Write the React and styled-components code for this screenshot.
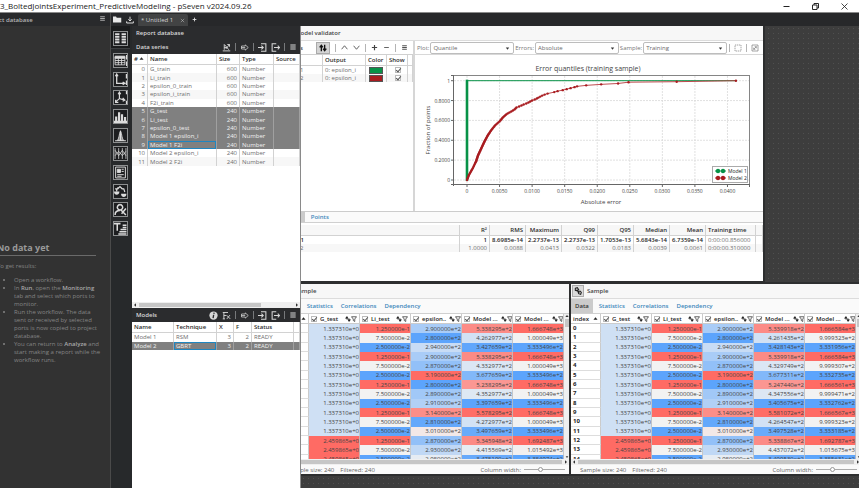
import React from "react";
import styled, { createGlobalStyle, css } from "styled-components";

const GlobalStyle = createGlobalStyle`
  * {
    box-sizing: border-box;
  }
  body {
    margin: 0;
    background: #3d3d3d;
  }
  body, button, select, input, table {
    font-family: "Open Sans", "Noto Sans", sans-serif;
    font-size: 6px;
    line-height: 8px;
  }
  button {
    border: 0;
    padding: 0;
    background: none;
    color: inherit;
  }
  a {
    text-decoration: none;
  }
`;

/* ---------- shell ---------- */

const Shell = styled.div`
  display: flex;
  flex-direction: column;
  height: 100vh;
  overflow: hidden;
`;

const TitleBar = styled.header`
  display: flex;
  justify-content: space-between;
  align-items: center;
  flex: none;
  height: 13px;
  padding-right: 10px;
  background: #fff;
  border-bottom: 1px solid #8a8a8a;
  color: #222;
  h1 {
    margin: 0;
    font-size: 8px;
    font-weight: 400;
    line-height: 12px;
    white-space: nowrap;
  }
`;

const WindowButtons = styled.div`
  display: flex;
  gap: 20px;
  button {
    display: flex;
  }
`;

const Body = styled.div`
  display: flex;
  flex: 1;
  min-height: 0;
`;

/* ---------- project database ---------- */

const ProjectPanel = styled.aside`
  display: flex;
  flex-direction: column;
  flex: none;
  width: 141px;
  margin-left: -30px;
  background: #323232;
  border-right: 1px solid #4a4a4a;
  color: #858585;
`;

const ProjectHeader = styled.div`
  display: flex;
  justify-content: space-between;
  align-items: center;
  height: 13px;
  padding: 0 4px 0 14px;
  background: #292a2c;
  color: #b5b5b5;
  font-weight: 600;
`;

const EmptyNote = styled.div`
  margin: 216px 14px 0 27px;
  white-space: nowrap;
  h2 {
    margin: 0 0 6px;
    padding-bottom: 1px;
    border-bottom: 1px solid #6a6a6a;
    font-size: 9px;
    line-height: 12px;
    color: #9a9a9a;
  }
  p {
    margin: 0 0 6px;
  }
  ul {
    margin: 0;
    padding: 0 0 0 17px;
  }
  b {
    color: #a8a8a8;
    font-weight: 600;
  }
`;

/* ---------- workspace ---------- */

const Workspace = styled.main`
  display: flex;
  flex-direction: column;
  flex: 1;
  min-width: 0;
`;

const TabBar = styled.nav`
  display: flex;
  align-items: center;
  flex: none;
  height: 13px;
  padding-left: 2px;
  gap: 4px;
  background: #27282a;
  color: #e8e8e8;
  button {
    display: flex;
  }
`;

const ReportTab = styled.div`
  display: flex;
  align-items: center;
  justify-content: space-between;
  align-self: flex-end;
  width: 50px;
  height: 12px;
  padding: 0 3px;
  border-radius: 2px 2px 0 0;
  background: #424344;
  color: #d5d5d5;
`;

const WorkArea = styled.div`
  display: flex;
  flex: 1;
  min-height: 0;
`;

const ToolStrip = styled.div`
  display: flex;
  flex-direction: column;
  align-items: center;
  flex: none;
  width: 21px;
  padding-right: 2px;
  background: #27292b;
`;

const ToolCurrent = styled.div`
  display: flex;
  justify-content: center;
  align-items: flex-end;
  width: 100%;
  height: 23px;
  padding-bottom: 2px;
  margin-bottom: 4px;
  background: #1b1c1d;
  border-bottom: 1px solid #3d3f41;
`;

const ToolList = styled.div`
  display: flex;
  flex-direction: column;
  justify-content: space-between;
  height: 183px;
`;

const ToolButton = styled.button`
  display: flex;
  width: 15px;
  height: 15px;
  border: 1px solid #8d8f90;
  background: #1d1e20;
  color: #dcdcdc;
`;

const Report = styled.section`
  display: flex;
  flex-direction: column;
  flex: none;
  width: 169px;
  border-right: 1px solid #8a8a8a;
  background: #fff;
`;

const DarkBar = styled.div`
  display: flex;
  align-items: center;
  flex: none;
  height: 14px;
  padding: 0 3px 0 4px;
  background: #2b2c2e;
  color: #d8d8d8;
  font-weight: 600;
`;

const BarActions = styled.div`
  display: flex;
  align-items: center;
  gap: ${(p) => p.$gap || 3}px;
  margin-left: auto;
  button {
    display: flex;
  }
`;

const Split = styled.i`
  width: 1px;
  height: 8px;
  background: ${(p) => (p.$light ? "#b4b4b4" : "#77797b")};
`;

/* ---------- plain tables ---------- */

const PlainTable = styled.table`
  width: 100%;
  height: ${(p) => p.$height}px;
  border-collapse: separate;
  border-spacing: 0;
  table-layout: fixed;
  color: #6e6e6e;
  th, td {
    overflow: hidden;
    padding: 0 2px;
    border-right: 1px solid #d2d2d2;
    line-height: 8px;
    text-align: left;
    white-space: nowrap;
  }
  thead tr {
    height: 11px;
  }
  th {
    border-bottom: 1px solid #d2d2d2;
    color: #2c2c2c;
    font-weight: 600;
  }
  .num {
    text-align: right;
  }
  tbody tr:nth-child(even) {
    background: #f7f7f7;
  }
`;

const Row = styled.tr`
  ${(p) =>
    p.$selected &&
    css`
      td {
        background: #808080;
        border-color: #a0a0a0;
        color: #f0f0f0;
      }
    `}
`;

const Cell = styled.td`
  ${(p) => p.$focus && "box-shadow: inset 0 0 0 1px #1f86c0;"}
`;

const TablePane = styled.div`
  flex: 1;
  min-height: 0;
`;

const DataPane = styled.div`
  height: 248px;
`;

const HScroll = styled.div`
  display: flex;
  align-items: center;
  justify-content: space-between;
  flex: none;
  height: 6px;
  padding: 0 1px;
  background: #efefef;
  color: #333;
  i {
    flex: 1;
    height: 4px;
    margin: 0 ${(p) => p.$end || 2}px 0 2px;
    background: #c6c6c6;
  }
`;

/* ---------- canvas and its windows ---------- */

const Canvas = styled.div`
  position: relative;
  flex: 1;
  overflow: hidden;
  background-color: #3d3d3d;
  background-image: radial-gradient(circle, #505050 0.5px, transparent 1px);
  background-size: 5px 5px;
`;

const Frame = styled.section`
  position: absolute;
  left: ${(p) => p.$left}px;
  top: ${(p) => p.$top}px;
  width: ${(p) => p.$width}px;
  height: ${(p) => p.$height}px;
  display: flex;
  flex-direction: column;
  background: #fff;
  box-shadow: 0 0 0 2px #2d2e2f;
  color: #555;
`;

const FrameTitle = styled.div`
  display: flex;
  align-items: center;
  gap: 3px;
  flex: none;
  height: 15px;
  padding-left: 1px;
  background: #f7f7f7;
  border-bottom: 1px solid #dcdcdc;
  color: #444;
  font-weight: 600;
`;

const LinkButton = styled.button`
  display: flex;
  padding: 1px;
  border: 1px solid #aaa;
  background: #dadada;
  color: #222;
`;

const ValidatorTop = styled.div`
  display: flex;
  height: 171px;
  border-bottom: 1px solid #ccc;
`;

const ModelsPane = styled.div`
  width: 136px;
  border-right: 2px solid #d6d6d6;
`;

const LightBar = styled.div`
  display: flex;
  align-items: center;
  height: 14px;
  padding: 0 5px 0 3px;
  border-bottom: 1px solid #d0d0d0;
  color: #444;
  font-weight: 600;
`;

const PressedButton = styled.button`
  && {
    padding: 1px 2px;
    border: 1px solid #aaa;
    background: #d4d4d4;
    color: #111;
  }
`;

const Swatch = styled.i`
  display: block;
  width: 14px;
  height: 7px;
  margin-left: 1px;
  border: 1px solid #555;
  background: ${(p) => p.$color};
`;

const Check = styled.input`
  appearance: none;
  position: relative;
  flex: none;
  display: block;
  width: 6px;
  height: 6px;
  margin: 0 0 0 ${(p) => p.$indent || 0}px;
  border: 1px solid #bbb;
  background: #fff;
  &:checked::after {
    content: "";
    position: absolute;
    left: 1px;
    top: -1px;
    width: 2px;
    height: 4px;
    border: solid #555;
    border-width: 0 1px 1px 0;
    transform: rotate(40deg);
  }
`;

const PlotPane = styled.div`
  flex: 1;
  min-width: 0;
  svg.chart {
    display: block;
    width: 100%;
  }
`;

const PlotBar = styled.div`
  display: flex;
  align-items: center;
  height: 14px;
  padding: 0 4px 0 2px;
  gap: 1px;
  border-bottom: 1px solid #d8d8d8;
  color: #777;
`;

const Picker = styled.span`
  position: relative;
  flex: 1;
  display: flex;
  select {
    appearance: none;
    width: 100%;
    height: 12px;
    padding: 0 2px;
    border: 1px solid #bdbdbd;
    border-radius: 2px;
    background: #fff;
    color: #6a6a6a;
  }
  svg {
    position: absolute;
    right: 4px;
    top: 4px;
    color: #333;
    pointer-events: none;
  }
`;

const PlotActions = styled.div`
  display: flex;
  align-items: center;
  gap: 4px;
  margin-left: 1px;
  button {
    display: flex;
  }
`;

const Tabs = styled.nav`
  display: flex;
  flex: none;
  height: ${(p) => p.$height}px;
  background: #fafafa;
  border-bottom: 1px solid #d0d0d0;
`;

const Tab = styled.a`
  display: flex;
  align-items: center;
  padding: 0 4px;
  color: #3d87bb;
  font-weight: 600;
  ${(p) => p.$active && "margin-right: 2px; background: #cbcbcb; color: #333;"}
`;

const StatsPane = styled.div`
  flex: 1;
  padding-top: 2px;
  thead {
    background: #f7f7f7;
  }
  tbody tr:first-child {
    color: #222;
    font-weight: 600;
  }
  tbody tr:first-child td:last-child,
  tbody tr:first-child td:nth-last-child(2) {
    color: #6e6e6e;
    font-weight: 400;
  }
`;

const GridArea = styled.div`
  display: flex;
  flex: 1;
  min-height: 0;
  overflow: hidden;
`;

const HeatPane = styled.div`
  flex: 1;
  min-width: 0;
`;

const HeatTable = styled.table`
  width: 100%;
  height: 150px;
  border-collapse: separate;
  border-spacing: 0;
  table-layout: fixed;
  color: #444;
  th, td {
    overflow: hidden;
    padding: 0;
    border-right: 1px solid rgba(190, 190, 190, 0.8);
    line-height: 8px;
    text-align: right;
    white-space: nowrap;
  }
  thead th {
    height: 10px;
    border-bottom: 1px solid #ccc;
    color: #222;
    font-weight: 600;
  }
  tbody th {
    padding-left: 2px;
    border-bottom: 1px solid #ddd;
    color: #222;
    font-weight: 700;
    text-align: left;
  }
`;

const HeatCell = styled.td`
  background: ${(p) => p.$tone};
`;

const HeadCell = styled.div`
  display: flex;
  align-items: center;
  gap: 3px;
  padding: 0 2px;
  > :last-child {
    margin-left: auto;
  }
`;

const SortIcons = styled.span`
  display: flex;
`;

const VScroll = styled.div`
  display: flex;
  flex-direction: column;
  align-items: center;
  justify-content: space-between;
  flex: none;
  width: 5px;
  background: #efefef;
  color: #333;
  i {
    width: 4px;
    height: 8px;
    margin: 1px 0 auto;
    background: #c6c6c6;
  }
`;

const StatusBar = styled.footer`
  display: flex;
  align-items: center;
  flex: none;
  gap: 6px;
  height: 9px;
  padding: 0 4px 0 9px;
  background: #fafafa;
  color: #666;
  label {
    margin-left: auto;
  }
`;

const WidthSlider = styled.input`
  appearance: none;
  width: 41px;
  height: 5px;
  margin: 0 0 0 -3px;
  background: linear-gradient(#aaa, #aaa) center / 100% 1px no-repeat;
  &::-webkit-slider-thumb {
    appearance: none;
    width: 5px;
    height: 5px;
    border: 1px solid #999;
    border-radius: 50%;
    background: #fff;
  }
`;

/* ---------- icons ---------- */

function Icon({ size = 9, children }) {
  return (
    <svg
      width={size}
      height={size}
      viewBox="0 0 12 12"
      fill="none"
      stroke="currentColor"
      strokeWidth="1.4"
      aria-hidden="true"
    >
      {children}
    </svg>
  );
}

const icons = {
  menu: <path d="M2 3h8M2 6h8M2 9h8" strokeWidth="1.6" />,
  folder: <path d="M0 2h4l1 1.5h6V10H0z" fill="currentColor" stroke="none" />,
  download: <path d="M6 1v6M3.5 5L6 7.5 8.5 5M1 8v2.5h10V8" />,
  plus: <path d="M6 1.5v9M1.5 6h9" strokeWidth="2" />,
  minus: <path d="M2 6h8" />,
  up: <path d="M1 9l5-6 5 6" />,
  down: <path d="M1 3l5 6 5-6" />,
  close: <path d="M2 2l8 8M10 2l-8 8" strokeWidth="1.1" />,
  restore: <path d="M2 4h6v6H2zM4 4V2h6v6H8" strokeWidth="1.3" />,
  edit: <path d="M1 10.5h10M3 9V2l2 2 4 5M3 6h4M7 2h3v3M10 2L5 8" strokeWidth="1.2" />,
  tag: <path d="M2 4h5V2.5l4 3.5-4 3.5V8H2zM2 6h5" strokeWidth="1" />,
  importIn: <path d="M4 1h6.5v10H4M0 6h7M4.5 3.5L7 6 4.5 8.5" />,
  exportOut: <path d="M7 1H1.5v10H7M4 6h7.5M9 3.5L11.5 6 9 8.5" />,
  info: (
    <>
      <circle cx="6" cy="6" r="5.5" fill="currentColor" stroke="none" />
      <path d="M6.8 2.2L6.5 3.8M6.2 5L5.5 9.5" stroke="#2b2c2e" strokeWidth="1.8" />
    </>
  ),
  fx: <path d="M2.5 10.5V2H8M1 2h2M1 10.5h3M2.5 6h3M6 5.5l5 5M10.5 5.5l-4 5" strokeWidth="1.2" />,
  swap: <path d="M3.5 11V2M1 5l2.5-3L6 5M8.5 1v9M6 7l2.5 3L11 7" strokeWidth="2" />,
  link: <path d="M2 2l3-1 2 3-2 2-3-1zM6 7l3-1 2 2-1 3-3-1zM4 4l4 5" strokeWidth="1.6" />,
  select: <path d="M1.5 1.5h9v9h-9z" strokeDasharray="2 1" strokeWidth="1" />,
  expand: <path d="M1.5 1.5h9v9h-9zM4 8l4-4M5.5 4H8v2.5M4 5.5V8h2.5" strokeWidth="1" />,
  sort: <path d="M4 0L0 5h3v2h2V5h2zM8 12l4-5H9V5H7v2H5z" fill="currentColor" stroke="none" />,
  filter: <path d="M1 1.5h10L7.5 6v5L4.5 9V6z" />,
  arrowDown: <path d="M2 3.5h8L6 9z" fill="currentColor" stroke="none" />,
  arrowUp: <path d="M1 9h10L6 3z" fill="currentColor" stroke="none" />,
  arrowLeft: <path d="M9 1v10L3 6z" fill="currentColor" stroke="none" />,
  arrowRight: <path d="M3 1v10l6-5z" fill="currentColor" stroke="none" />,
};

const tools = [
  [
    "Table",
    <>
      <path d="M1 3h9v7H1zM4 4v6M7 4v6M1 6h9M1 8h9" strokeWidth="0.8" />
      <path d="M1 2h9v2H1z" fill="currentColor" strokeWidth="0.8" />
      <path d="M11.5 1v4M11.5 7v4" strokeWidth="1" />
    </>,
  ],
  ["2D plot", <path d="M2.5 1v8.5H9M1.3 3l1.2-2 1.2 2M8 8.3l2 1.2-2 1.2M11.5 1v4M11.5 7v4" strokeWidth="1.2" />],
  ["3D plot", <path d="M5 1v6l5 1.5M5 7l-3.5 3M3.8 3L5 1l1.2 2M8 6.5l2 2-2 1M1.5 8v2.5H4M11.5 0v3M11.5 9v3" strokeWidth="1.1" />],
  ["Histogram", <path d="M0 11h12M2 10V6M4.7 10V2M7.4 10V4M10.2 10V6.5" strokeWidth="2" />],
  [
    "Distribution",
    <>
      <path d="M3 10.5C5 9 5 2 6 2s1 7 3 8.5z" fill="#8f8f8f" strokeWidth="0.8" />
      <path d="M6 1.5v9M1 10.8h10" strokeWidth="1" />
    </>,
  ],
  ["Parallel coordinates", <path d="M1 1v10M4.3 1v10M7.7 1v10M11 1v10M1 3l3.3 5 3.4-5L11 8M1 8l3.3-4 3.4 4L11 4" strokeWidth="0.7" />],
  [
    "Report page",
    <>
      <path d="M1.5 1h9v10h-9zM7 3h2M7 5h2M3 8h6M3 9.5h4" strokeWidth="0.9" />
      <path d="M3 3h3v3H3z" fill="currentColor" strokeWidth="0.8" />
    </>,
  ],
  [
    "Model validator",
    <>
      <path d="M1 3.5h2.5l2-2 2 2H9l1 3M3.5 2v2M2.5 6V4" strokeWidth="1.1" />
      <path d="M0 6h5c0 4-5 4-5 0zM6.500 8h5c0 4-5 4-5 0z" fill="currentColor" stroke="none" />
    </>,
  ],
  ["Model explorer", <path d="M5.5 1.5a2.5 2.5 0 1 0 .1 0M1 11c0-3 2-4 4.5-4M6 6l5 5M7 10l4-5" strokeWidth="1.4" />],
  ["Text", <path d="M0 1.5h6M3 1.5V8M8 3h3.5M8 5h3.5M6 7h5.5M5 9h6.5M4 11h7.5" strokeWidth="1.4" />],
];

/* ---------- data ---------- */

const series = [
  ["G_train", 600],
  ["Li_train", 600],
  ["epsilon_0_train", 600],
  ["epsilon_i_train", 600],
  ["F2i_train", 600],
  ["G_test", 240],
  ["Li_test", 240],
  ["epsilon_0_test", 240],
  ["Model 1 epsilon_i", 240],
  ["Model 1 F2i", 240],
  ["Model 2 epsilon_i", 240],
  ["Model 2 F2i", 240],
];

const stats = [
  ["Model 1", "1", "8.6985e-14", "2.2737e-13", "2.2737e-13", "1.7053e-13", "5.6843e-14", "6.7359e-14", "0:00:00.856000"],
  ["Model 2", "1.0000", "0.0088", "0.0413", "0.0322", "0.0183", "0.0039", "0.0061", "0:00:00.310000"],
];

const g = [...Array(12).fill("1.337310e+0"), ...Array(3).fill("2.459865e+0")];
const li = ["1.250000e-1", "7.500000e-2", "2.500000e-2"];
const eps = ["2.90", "2.80", "2.94", "2.90", "2.87", "3.19", "2.80", "2.89", "2.91", "3.14", "2.81", "3.01", "2.87", "2.93", "2.98"];

const firstEps = ["5.338295", "4.262977", "3.427659", "5.338295", "4.332977", "3.677659", "5.238295", "4.352977", "3.397659", "5.578295", "4.272977", "3.497659", "5.345948", "4.415569", "3.475190"];
const firstF = [
  "1.666748e+3", "1.000049e+3", "3.333496e+2",
  "1.666748e+3", "1.000049e+3", "3.333496e+2",
  "1.666748e+3", "1.000049e+3", "3.333496e+2",
  "1.666748e+3", "1.000049e+3", "3.333496e+2",
  "1.692487e+3", "1.015492e+3", "3.384974e+2",
];
const secondEps = ["5.339918", "4.261435", "3.428143", "5.339918", "4.329749", "3.677311", "5.247440", "4.347556", "3.405675", "5.581072", "4.264547", "3.497528", "5.338867", "4.437072", "3.499530"];
const secondF = [
  "1.666584e+3", "9.999323e+2", "3.331956e+2",
  "1.666584e+3", "9.999307e+2", "3.332735e+2",
  "1.666561e+3", "9.999471e+2", "3.332762e+2",
  "1.666567e+3", "9.999323e+2", "3.333185e+2",
  "1.692787e+3", "1.015675e+3", "3.385631e+2",
];

const buildRows = (modelEps, modelF) =>
  g.map((value, i) => [value, li[i % 3], `${eps[i]}0000e+2`, `${modelEps[i]}e+2`, modelF[i]]);

// low, middle and high value of every column
const scales = [
  [0.9, 1.47, 2.3],
  [0.025, 0.075, 0.125],
  [280, 299.5, 319],
  [340, 450, 560],
  [333, 1000, 1667],
];

const BLUE = [92, 164, 252];
const GREY = [242, 242, 242];
const RED = [255, 107, 100];

function heat(text, [low, mid, high]) {
  const value = Number(text);
  const end = value < mid ? BLUE : RED;
  const span = value < mid ? mid - low : high - mid;
  const t = Math.min(1, Math.abs(value - mid) / span);
  return `rgb(${GREY.map((c, i) => Math.round(c + (end[i] - c) * t)).join(",")})`;
}

/* ---------- chart ---------- */

const curve = [
  [0, 0], [0.0003, 0.05], [0.0009, 0.12], [0.0014, 0.19], [0.0017, 0.25],
  [0.0022, 0.32], [0.0027, 0.39], [0.0032, 0.45], [0.0037, 0.5], [0.0043, 0.55],
  [0.005, 0.59], [0.0055, 0.63], [0.0061, 0.665], [0.0068, 0.69], [0.0073, 0.71],
  [0.0076, 0.73], [0.0082, 0.745], [0.0087, 0.76], [0.0093, 0.775], [0.01, 0.8],
  [0.0106, 0.815], [0.0111, 0.835], [0.0117, 0.855], [0.0126, 0.875],
];
const tail = [
  [0.0134, 0.885], [0.0139, 0.895], [0.0147, 0.905], [0.0153, 0.915], [0.0159, 0.925],
  [0.0165, 0.935], [0.0169, 0.943], [0.0183, 0.953], [0.0206, 0.963], [0.0232, 0.972],
  [0.0248, 0.985], [0.0322, 0.99], [0.0413, 1],
];

function quantile(fraction) {
  const i = curve.findIndex((p) => p[1] >= fraction);
  if (i <= 0) return curve[0];
  const [x0, y0] = curve[i - 1];
  const [x1, y1] = curve[i];
  return [x0 + ((x1 - x0) * (fraction - y0)) / (y1 - y0), fraction];
}

const points = [...Array.from({ length: 88 }, (_, i) => quantile(i / 100)), ...tail];
const px = (v) => 52 + v * 6512;
const py = (v) => 125 - v * 99.3;

function QuantileChart() {
  const xs = [0, 1, 2, 3, 4, 5, 6, 7, 8].map((i) => i * 0.005);
  const ys = [0, 0.2, 0.4, 0.6, 0.8, 1];
  return (
    <svg className="chart" viewBox="0 0 348 156" fontSize="5" fill="#444">
      <text x="173" y="16" textAnchor="middle" fontSize="7">
        Error quantiles (training sample)
      </text>
      <g stroke="#d9d9d9" strokeDasharray="2 1" strokeWidth="0.8">
        {xs.map((x) => (
          <path key={x} d={`M${px(x)} 21V130`} />
        ))}
        {ys.map((y) => (
          <path key={y} d={`M39 ${py(y)}H334`} />
        ))}
      </g>
      <rect x="38.5" y="20.5" width="296" height="109" fill="none" stroke="#858585" />
      <g stroke="#666">
        <path d="M38.5 20v111M38 129.5h297M334.5 129v3M36 20.5h3M36 129.5h3" />
        {xs.map((x) => (
          <path key={x} d={`M${px(x)} 129v3`} />
        ))}
        {ys.map((y) => (
          <path key={y} d={`M36 ${py(y)}h3`} />
        ))}
      </g>
      {xs.map((x) => (
        <text key={x} x={px(x)} y="138" textAnchor="middle">
          {x ? x.toFixed(4) : "0"}
        </text>
      ))}
      {ys.map((y) => (
        <text key={y} x="35" y={py(y) + 2} textAnchor="end">
          {y === 0 || y === 1 ? y : y.toFixed(4)}
        </text>
      ))}
      <text x="186" y="149" textAnchor="middle" fontSize="6">
        Absolute error
      </text>
      <text transform="translate(15 75) rotate(-90)" textAnchor="middle" fontSize="6">
        Fraction of points
      </text>
      <path d={`M52 125V25.7H${px(0.0413)}`} fill="none" stroke="#079247" />
      <path d="M52 126V24.7" stroke="#079247" strokeWidth="2.6" />
      <g fill="#a81c20">
        <polyline
          points={points.map(([x, y]) => `${px(x)},${py(y)}`).join(" ")}
          fill="none"
          stroke="#b8383c"
          strokeWidth="0.9"
        />
        {points.map(([x, y], i) => (
          <circle key={i} cx={px(x)} cy={py(y)} r="1.2" />
        ))}
      </g>
      <rect x="297.5" y="111.5" width="35" height="16" fill="#fff" stroke="#aaa" />
      {[["Model 1", "#079247", 116], ["Model 2", "#a81c20", 123]].map(([name, color, y]) => (
        <g key={name}>
          <path d={`M300 ${y}h11`} stroke={color} />
          <circle cx="303" cy={y} r="2.2" fill={color} />
          <circle cx="308" cy={y} r="2.2" fill={color} />
          <text x="313" y={y + 2} fill="#222">
            {name}
          </text>
        </g>
      ))}
    </svg>
  );
}

/* ---------- parts ---------- */

function Action({ label, icon, size = 9 }) {
  return (
    <button type="button" aria-label={label}>
      <Icon size={size}>{icons[icon]}</Icon>
    </button>
  );
}

function ScrollRow({ end }) {
  return (
    <HScroll $end={end}>
      <Icon size={4}>{icons.arrowLeft}</Icon>
      <i />
      <Icon size={4}>{icons.arrowRight}</Icon>
    </HScroll>
  );
}

function Columns({ widths }) {
  return (
    <colgroup>
      {widths.map((w, i) => (
        <col key={i} width={w} />
      ))}
    </colgroup>
  );
}

function Select({ id, label, value }) {
  return (
    <>
      <label htmlFor={id}>{label}</label>
      <Picker>
        <select id={id} defaultValue={value}>
          <option>{value}</option>
        </select>
        <Icon size={5}>{icons.arrowDown}</Icon>
      </Picker>
    </>
  );
}

function ReportDatabase() {
  return (
    <Report>
      <DarkBar>Report database</DarkBar>
      <DarkBar>
        Data series
        <BarActions $gap={4}>
          <Action label="Edit" icon="edit" />
          <Split />
          <Action label="Rename" icon="tag" />
          <Split />
          <Action label="Import" icon="importIn" />
          <Action label="Export" icon="exportOut" />
          <Split />
          <Action label="Menu" icon="menu" size={8} />
        </BarActions>
      </DarkBar>
      <DataPane>
        <PlainTable $height={112}>
          <Columns widths={[16, 69, 23, 34]} />
          <thead>
            <tr>
              <th>
                # <Icon size={5}>{icons.arrowUp}</Icon>
              </th>
              <th>Name</th>
              <th>Size</th>
              <th>Type</th>
              <th>Source</th>
            </tr>
          </thead>
          <tbody>
            {series.map(([name, size], i) => (
              <Row key={name} $selected={i > 4 && i < 10}>
                <td className="num">{i}</td>
                <Cell $focus={i === 9}>{name}</Cell>
                <td className="num">{size}</td>
                <td>Number</td>
                <td />
              </Row>
            ))}
          </tbody>
        </PlainTable>
      </DataPane>
      <ScrollRow end={34} />
      <DarkBar>
        Models
        <BarActions $gap={4}>
          <Action label="Info" icon="info" />
          <Action label="Formula" icon="fx" />
          <Split />
          <Action label="Rename" icon="tag" />
          <Split />
          <Action label="Import" icon="importIn" />
          <Action label="Export" icon="exportOut" />
          <Split />
          <Action label="Menu" icon="menu" size={8} />
        </BarActions>
      </DarkBar>
      <TablePane>
        <PlainTable $height={28}>
          <Columns widths={[42, 43, 17, 18, 42]} />
          <thead>
            <tr>
              <th>Name</th>
              <th>Technique</th>
              <th>X</th>
              <th>F</th>
              <th>Status</th>
              <th />
            </tr>
          </thead>
          <tbody>
            {[["Model 1", "RSM"], ["Model 2", "GBRT"]].map(([name, technique], i) => (
              <Row key={name} $selected={i === 1}>
                <td>{name}</td>
                <Cell $focus={i === 1}>{technique}</Cell>
                <td className="num">3</td>
                <td className="num">2</td>
                <td>READY</td>
                <td />
              </Row>
            ))}
          </tbody>
        </PlainTable>
      </TablePane>
    </Report>
  );
}

function ModelValidator() {
  return (
    <Frame $left={-22} $top={0} $width={484} $height={255}>
      <FrameTitle>
        <LinkButton type="button" aria-label="Link">
          <Icon size={8}>{icons.link}</Icon>
        </LinkButton>
        Model validator
      </FrameTitle>
      <ValidatorTop>
        <ModelsPane>
          <LightBar>
            Models
            <BarActions $gap={5}>
              <PressedButton type="button" aria-label="Compare">
                <Icon size={8}>{icons.swap}</Icon>
              </PressedButton>
              <Split $light />
              <Action label="Move up" icon="up" size={7} />
              <Action label="Move down" icon="down" size={7} />
              <Split $light />
              <Action label="Add" icon="plus" size={7} />
              <Action label="Remove" icon="minus" size={7} />
              <Split $light />
              <Action label="Menu" icon="menu" size={7} />
            </BarActions>
          </LightBar>
          <PlainTable $height={27}>
            <Columns widths={[44, 43, 21, 21]} />
            <thead>
              <tr>
                <th>Name</th>
                <th>Output</th>
                <th>Color</th>
                <th>Show</th>
                <th />
              </tr>
            </thead>
            <tbody>
              {[["Model 1", "#079247"], ["Model 2", "#a81c20"]].map(([name, color]) => (
                <tr key={name}>
                  <td>{name}</td>
                  <td>0: epsilon_i</td>
                  <td>
                    <Swatch $color={color} />
                  </td>
                  <td>
                    <Check type="checkbox" aria-label={`Show ${name}`} defaultChecked $indent={6} />
                  </td>
                  <td />
                </tr>
              ))}
            </tbody>
          </PlainTable>
        </ModelsPane>
        <PlotPane>
          <PlotBar>
            <Select id="plot" label="Plot:" value="Quantile" />
            <Select id="errors" label="Errors:" value="Absolute" />
            <Select id="sample" label="Sample:" value="Training" />
            <PlotActions>
              <Split $light />
              <Action label="Select area" icon="select" size={8} />
              <Split $light />
              <Action label="Expand" icon="expand" size={8} />
            </PlotActions>
          </PlotBar>
          <QuantileChart />
        </PlotPane>
      </ValidatorTop>
      <Tabs $height={11}>
        <Tab href="#errors" $active>
          Errors
        </Tab>
        <Tab href="#points">Points</Tab>
      </Tabs>
      <StatsPane>
        <PlainTable $height={27}>
          <Columns widths={[181, 30, 36, 36, 36, 36, 36, 36, 50]} />
          <thead>
            <tr>
              <th>Model</th>
              {["R²", "RMS", "Maximum", "Q99", "Q95", "Median", "Mean"].map((name) => (
                <th key={name} className="num">
                  {name}
                </th>
              ))}
              <th>Training time</th>
              <th />
            </tr>
          </thead>
          <tbody>
            {stats.map((row) => (
              <tr key={row[0]}>
                {row.map((value, i) => (
                  <td key={i} className={i > 0 && i < 8 ? "num" : undefined}>
                    {value}
                  </td>
                ))}
                <td />
              </tr>
            ))}
          </tbody>
        </PlainTable>
      </StatsPane>
    </Frame>
  );
}

function SampleWindow({ id, left, rows }) {
  const names = ["G_test", "Li_test", "epsilon..", "Model ...", "Model ..."];
  return (
    <Frame $left={left} $top={258} $width={290} $height={190}>
      <FrameTitle>
        <LinkButton type="button" aria-label="Link">
          <Icon size={8}>{icons.link}</Icon>
        </LinkButton>
        Sample
      </FrameTitle>
      <Tabs $height={15}>
        <Tab href="#data" $active>
          Data
        </Tab>
        <Tab href="#statistics">Statistics</Tab>
        <Tab href="#correlations">Correlations</Tab>
        <Tab href="#dependency">Dependency</Tab>
      </Tabs>
      <GridArea>
        <HeatPane>
          <HeatTable>
            <Columns widths={[30, 51, 51, 51, 51, 51]} />
            <thead>
              <tr>
                <th>
                  <HeadCell>
                    index <Icon size={5}>{icons.arrowUp}</Icon>
                  </HeadCell>
                </th>
                {names.map((name, i) => (
                  <th key={i}>
                    <HeadCell>
                      <Check type="checkbox" aria-label={`Column ${i + 1}`} defaultChecked />
                      {name}
                      <SortIcons>
                        <Icon size={6}>{icons.sort}</Icon>
                        <Icon size={6}>{icons.filter}</Icon>
                      </SortIcons>
                    </HeadCell>
                  </th>
                ))}
              </tr>
            </thead>
            <tbody>
              {rows.map((row, i) => (
                <tr key={i}>
                  <th>{i}</th>
                  {row.map((value, c) => (
                    <HeatCell key={c} $tone={heat(value, scales[c])}>
                      {value}
                    </HeatCell>
                  ))}
                </tr>
              ))}
            </tbody>
          </HeatTable>
        </HeatPane>
        <VScroll>
          <Icon size={4}>{icons.arrowUp}</Icon>
          <i />
          <Icon size={4}>{icons.arrowDown}</Icon>
        </VScroll>
      </GridArea>
      <ScrollRow />
      <StatusBar>
        <span>Sample size: 240</span>
        <span>Filtered: 240</span>
        <label htmlFor={id}>Column width:</label>
        <WidthSlider id={id} type="range" min="0" max="100" defaultValue="40" />
      </StatusBar>
    </Frame>
  );
}

function App() {
  return (
    <Shell>
      <GlobalStyle />
      <TitleBar>
        <h1>3_BoltedJointsExperiment_PredictiveModeling - pSeven v2024.09.26</h1>
        <WindowButtons>
          <Action label="Minimize" icon="minus" />
          <Action label="Restore" icon="restore" />
          <Action label="Close" icon="close" />
        </WindowButtons>
      </TitleBar>
      <Body>
        <ProjectPanel>
          <ProjectHeader>
            Project database
            <Action label="Menu" icon="menu" size={7} />
          </ProjectHeader>
          <EmptyNote>
            <h2>No data yet</h2>
            <p>To get results:</p>
            <ul>
              <li>Open a workflow.</li>
              <li>
                In <b>Run</b>, open the <b>Monitoring</b>
                <br />
                tab and select which ports to
                <br />
                monitor.
              </li>
              <li>
                Run the workflow. The data
                <br />
                sent or received by selected
                <br />
                ports is now copied to project
                <br />
                database.
              </li>
              <li>
                You can return to <b>Analyze</b> and
                <br />
                start making a report while the
                <br />
                workflow runs.
              </li>
            </ul>
          </EmptyNote>
        </ProjectPanel>
        <Workspace>
          <TabBar>
            <Action label="Open" icon="folder" />
            <Action label="Save" icon="download" size={8} />
            <ReportTab>
              * Untitled 1 <Action label="Close tab" icon="close" size={5} />
            </ReportTab>
            <Action label="New tab" icon="plus" size={5} />
          </TabBar>
          <WorkArea>
            <ToolStrip>
              <ToolCurrent>
                <ToolButton type="button" aria-label="Report database">
                  <Icon size={13}>
                    <path
                      d="M1 2h4M1 4.5h4M1 7h4M1 9.5h4M7 2h4M7 4.5h4M7 7h4M7 9.5h4"
                      strokeWidth="1.8"
                    />
                  </Icon>
                </ToolButton>
              </ToolCurrent>
              <ToolList>
                {tools.map(([label, drawing]) => (
                  <ToolButton key={label} type="button" aria-label={label}>
                    <Icon size={13}>{drawing}</Icon>
                  </ToolButton>
                ))}
              </ToolList>
            </ToolStrip>
            <ReportDatabase />
            <Canvas>
              <ModelValidator />
              <SampleWindow id="width-1" left={-22} rows={buildRows(firstEps, firstF)} />
              <SampleWindow id="width-2" left={270} rows={buildRows(secondEps, secondF)} />
            </Canvas>
          </WorkArea>
        </Workspace>
      </Body>
    </Shell>
  );
}

export default App;
